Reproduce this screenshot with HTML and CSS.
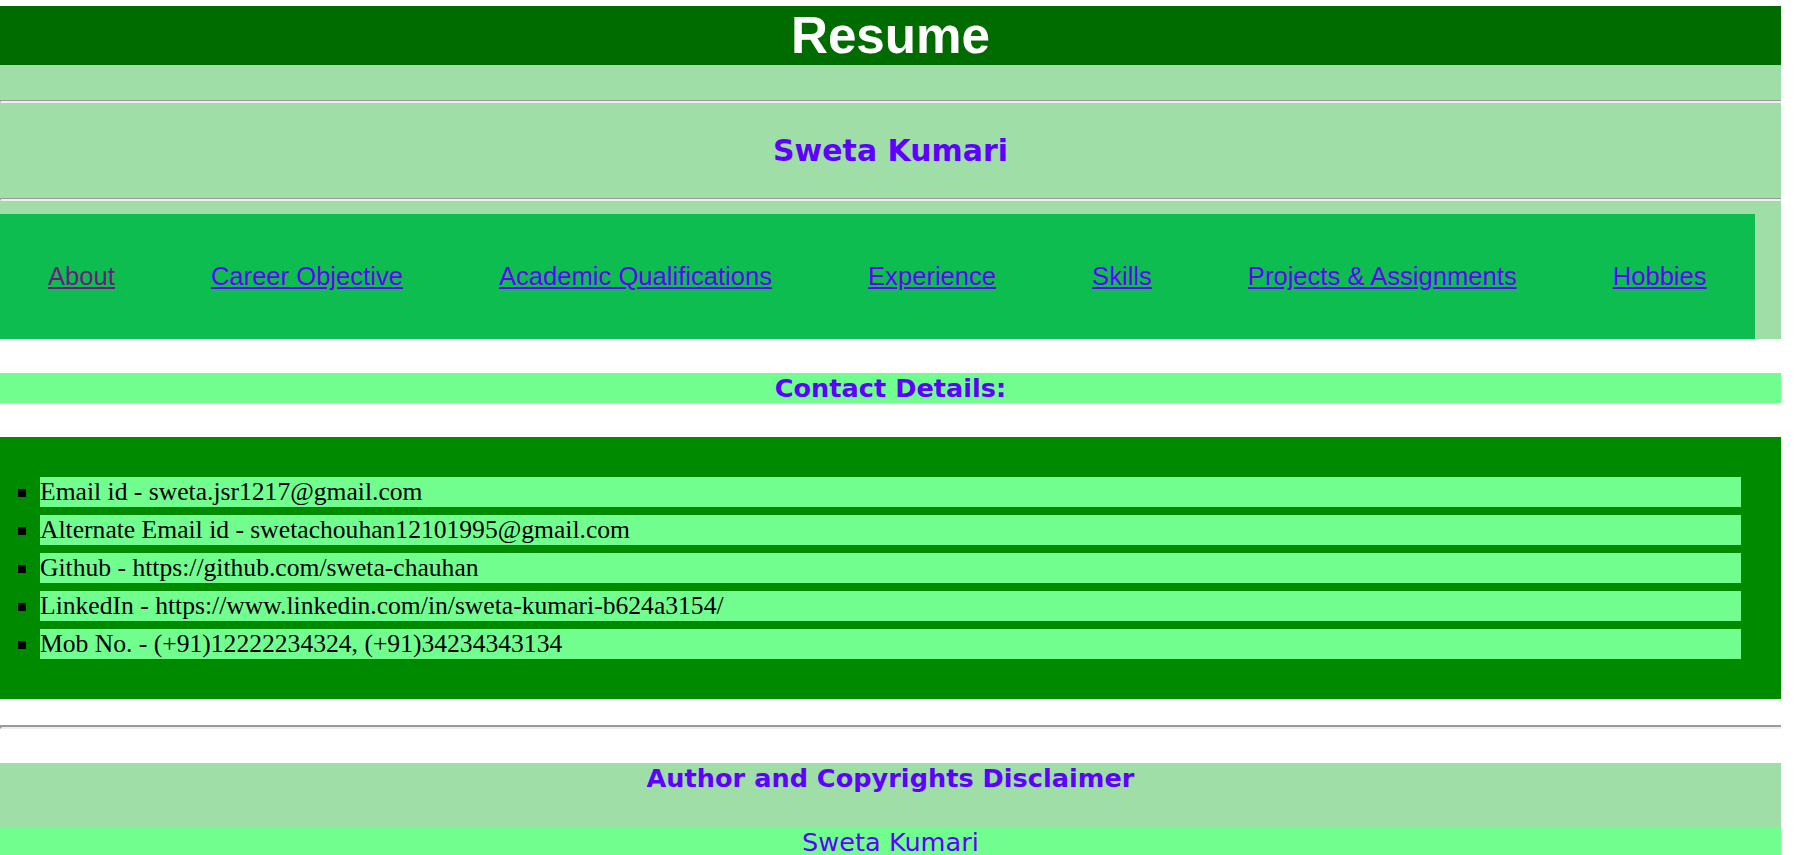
FILE: index.html
```html
<!DOCTYPE html>
<html lang="en">
<head>
<meta charset="utf-8">
<title>Resume</title>
<link rel="stylesheet" href="styles.css">
</head>
<body class="page">
  <header class="top">
    <h1 class="top-title">Resume</h1>
  </header>

  <section class="intro">
    <hr class="rule">
    <h3 class="name">Sweta Kumari</h3>
    <hr class="rule">
    <nav class="nav">
      <a class="nav-link visited" href="#about">About</a>
      <a class="nav-link" href="#career">Career Objective</a>
      <a class="nav-link" href="#academic">Academic Qualifications</a>
      <a class="nav-link" href="#experience">Experience</a>
      <a class="nav-link" href="#skills">Skills</a>
      <a class="nav-link" href="#projects">Projects &amp; Assignments</a>
      <a class="nav-link" href="#hobbies">Hobbies</a>
    </nav>
  </section>

  <h4 class="bar-title">Contact Details:</h4>
  <ul class="contacts">
    <li class="contact-item">Email id - sweta.jsr1217@gmail.com</li>
    <li class="contact-item">Alternate Email id - swetachouhan12101995@gmail.com</li>
    <li class="contact-item">Github - https://github.com/sweta-chauhan</li>
    <li class="contact-item">LinkedIn - https://www.linkedin.com/in/sweta-kumari-b624a3154/</li>
    <li class="contact-item">Mob No. - (+91)12222234324, (+91)34234343134</li>
  </ul>

  <hr class="rule-thick">

  <footer class="footer">
    <div class="disclaimer">
      <h4 class="disclaimer-title">Author and Copyrights Disclaimer</h4>
    </div>
    <p class="author">Sweta Kumari</p>
  </footer>
</body>
</html>
```

FILE: styles.css
```css
html {
  font-size: 25.6px;
}

.page {
  margin: 0;
  padding: 6px 0 48px 0;
  width: 1781px;
  font-family: "Liberation Serif", "Times New Roman", serif;
  font-size: 25.6px;
  background: #ffffff;
}

.top {
  background: #006c00;
}

.top-title {
  margin: 0;
  font-family: "Liberation Sans", Arial, sans-serif;
  font-weight: bold;
  font-size: 51.2px;
  line-height: 59px;
  color: #ffffff;
  text-align: center;
}

.intro {
  background: #a0dea8;
  padding-top: 35px;
}

.rule {
  margin: 0;
  height: 0;
  border: 0;
  border-top: 1px solid #9a9a9a;
  border-left: 1px solid #9a9a9a;
  border-bottom: 2px solid #eeeeee;
}

.name {
  margin: 0;
  padding: 30px 0;
  font-family: "DejaVu Sans", sans-serif;
  font-weight: bold;
  font-size: 29.95px;
  line-height: 35px;
  color: #5f00ff;
  text-align: center;
}

.nav {
  display: flex;
  width: fit-content;
  margin-top: 13px;
  background: #0dbd4f;
}

.nav-link {
  padding: 48px;
  font-family: "Liberation Sans", Arial, sans-serif;
  font-size: 25.6px;
  line-height: 29px;
  color: #5f00ff;
  text-decoration: underline;
}

.nav-link.visited {
  color: #6c1a82;
}

.bar-title {
  margin: 34px 0;
  background: #72fe8f;
  font-family: "DejaVu Sans", sans-serif;
  font-weight: bold;
  font-size: 25.6px;
  line-height: 30px;
  color: #5f00ff;
  text-align: center;
}

.contacts {
  margin: 0;
  padding: 40px;
  background: #008a00;
  list-style: square;
  display: flex;
  flex-direction: column;
  gap: 8px;
}

.contact-item {
  display: list-item;
  background: #72fe8f;
  color: #000000;
  font-size: 25.6px;
  line-height: 30px;
}

.rule-thick {
  margin: 26px 0 34px 0;
  height: 0;
  border: 0;
  border-top: 2px solid #9a9a9a;
  border-left: 2px solid #9a9a9a;
  border-bottom: 2px solid #eeeeee;
}

.disclaimer {
  background: #a0dea8;
  padding-bottom: 34px;
}

.disclaimer-title {
  margin: 0;
  font-family: "DejaVu Sans", sans-serif;
  font-weight: bold;
  font-size: 25.6px;
  line-height: 30px;
  color: #5f00ff;
  text-align: center;
}

.author {
  margin: 0;
  background: #72fe8f;
  font-family: "DejaVu Sans", sans-serif;
  font-size: 25.6px;
  line-height: 30px;
  color: #5f00ff;
  text-align: center;
}

::-webkit-scrollbar {
  width: 21px;
  background: #f0f0f0;
}

::-webkit-scrollbar-thumb {
  background: #c1c1c1;
  border-left: 2px solid #ebebeb;
}
```
